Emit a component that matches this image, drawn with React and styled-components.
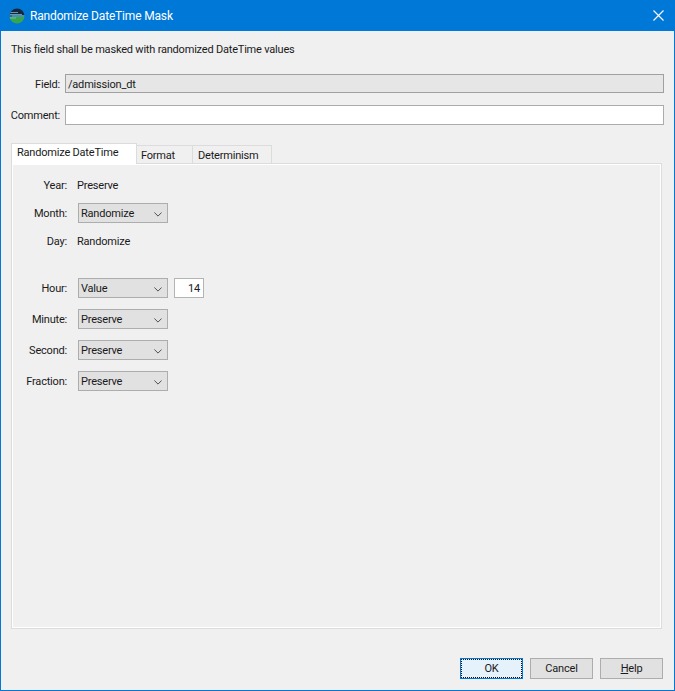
import React from 'react'
import styled, { createGlobalStyle } from 'styled-components'

const Global = createGlobalStyle`
  html, body { margin: 0; padding: 0; background: #f0f0f0; }
  * { box-sizing: border-box; }
`;
const Win = styled.div`
  width: 675px;
  height: 691px;
  display: flex;
  flex-direction: column;
  border: 1px solid #0078d7;
  border-top: none;
  background: #f0f0f0;
  color: #1a1a1a;
  font-family: "Roboto", "Noto Sans", sans-serif;
  font-size: 11px;
  letter-spacing: -0.2px;
  line-height: 16px;
`;
const TitleBar = styled.div`
  height: 31px;
  margin: 0 -1px;
  flex: none;
  display: flex;
  align-items: center;
  background: #0078d7;
  color: #fff;
  padding: 0 11px 0 9px;
  font-size: 12px;
  letter-spacing: -0.17px;
`;
const TitleText = styled.span`
  margin-left: 5px;
  flex: 1;
`;
const Intro = styled.div`
  margin: 11px 0 0 10px;
  height: 16px;
`;
const FieldRow = styled.div`
  display: flex;
  align-items: center;
  margin-top: ${p => p.$top}px;
`;
const FieldLabel = styled.div`
  width: 59px;
  padding-top: 2px;
  text-align: right;
`;
const TextBox = styled.div`
  margin-left: 5px;
  width: 599px;
  height: ${p => p.$h}px;
  padding: 2px 0 0 2px;
  display: flex;
  align-items: center;
  border: 1px solid ${p => (p.$disabled ? '#a0a0a0' : '#acacac')};
  background: ${p => (p.$disabled ? '#e6e6e6' : '#fff')};
`;
const TabStrip = styled.div`
  display: flex;
  align-items: flex-end;
  margin: 18px 0 0 10px;
  height: 20px;
  position: relative;
  z-index: 1;
`;
const Tab = styled.div`
  height: ${p => (p.$active ? 21 : 18)}px;
  width: ${p => p.$w}px;
  padding-left: ${p => p.$pad}px;
  padding-top: ${p => (p.$active ? 0 : 2)}px;
  padding-bottom: ${p => (p.$active ? 2 : 0)}px;
  display: flex;
  align-items: center;
  border: 1px solid #dcdcdc;
  border-left-width: ${p => (p.$active ? 1 : 0)}px;
  border-bottom: none;
  background: ${p => (p.$active ? '#fff' : '#f0f0f0')};
  margin-bottom: ${p => (p.$active ? -1 : 0)}px;
`;
const Panel = styled.div`
  margin: 0 0 0 10px;
  width: 651px;
  height: 466px;
  border: 1px solid #dcdcdc;
  box-shadow: inset 0 0 0 1px #fff;
  padding-top: 11px;
`;
const Row = styled.div`
  display: flex;
  align-items: center;
  height: 20px;
  margin-bottom: ${p => p.$after}px;
`;
const RowLabel = styled.div`
  width: 55px;
  padding-top: 2px;
  text-align: right;
  margin-right: 10px;
`;
const RowValue = styled.div`
  padding-top: 2px;
`;
const Combo = styled.div`
  width: 90px;
  height: 20px;
  margin-left: 1px;
  display: flex;
  align-items: center;
  justify-content: space-between;
  padding: 2px 5px 0 2px;
  border: 1px solid #adadad;
  background: #e1e1e1;
`;
const Chevron = () => (
  <svg width="8" height="5" viewBox="0 0 8 5">
    <path d="M0.4 0.5 L4 4.1 L7.6 0.5" fill="none" stroke="#404040" strokeWidth="0.9" />
  </svg>
);
const NumberBox = styled.div`
  width: 30px;
  height: 20px;
  margin-left: 6px;
  padding: 2px 3px 0 0;
  display: flex;
  align-items: center;
  justify-content: flex-end;
  border: 1px solid #b4b4b4;
  background: #fff;
`;
const Footer = styled.div`
  display: flex;
  justify-content: flex-end;
  gap: 7px;
  margin: 29px 11px 0 0;
`;
const Button = styled.div`
  width: 63px;
  height: 21px;
  display: flex;
  align-items: center;
  justify-content: center;
  border: 1px solid ${p => (p.$primary ? '#0078d7' : '#adadad')};
  background: ${p => (p.$primary ? '#e5f1fb' : '#e1e1e1')};
  outline: ${p => (p.$primary ? '1px dotted #111' : 'none')};
  outline-offset: -2px;
  u { text-underline-offset: 1px; }
`;

const AppIcon = () => (
  <svg width="16" height="16" viewBox="0 0 16 16">
    <defs>
      <clipPath id="disc"><circle cx="8" cy="8" r="7.5" /></clipPath>
    </defs>
    <g clipPath="url(#disc)">
      <rect width="16" height="7" fill="#16283a" />
      <rect y="7" width="16" height="2" fill="#2a6f8f" />
      <rect y="9" width="16" height="7" fill="#35a64a" />
      <path d="M0 4.5h9M0 6.5h13M3 8h13M0 10h7" stroke="#8cc8e8" strokeWidth="0.7" />
    </g>
  </svg>
);

const CloseIcon = () => (
  <svg width="11" height="11" viewBox="0 0 11 11">
    <path d="M0.5 0.5 L10.5 10.5 M10.5 0.5 L0.5 10.5" stroke="#fff" strokeWidth="1.1" />
  </svg>
);

const rows = [
  { label: 'Year:', text: 'Preserve', after: 8 },
  { label: 'Month:', combo: 'Randomize', after: 8 },
  { label: 'Day:', text: 'Randomize', after: 27 },
  { label: 'Hour:', combo: 'Value', number: '14', after: 11 },
  { label: 'Minute:', combo: 'Preserve', after: 11 },
  { label: 'Second:', combo: 'Preserve', after: 11 },
  { label: 'Fraction:', combo: 'Preserve', after: 0 },
];

const App = () => {
  return (
    <Win>
      <Global />
      <TitleBar>
        <AppIcon />
        <TitleText>Randomize DateTime Mask</TitleText>
        <CloseIcon />
      </TitleBar>
      <Intro>This field shall be masked with randomized DateTime values</Intro>
      <FieldRow $top={16}>
        <FieldLabel>Field:</FieldLabel>
        <TextBox $disabled $h={19}>/admission_dt</TextBox>
      </FieldRow>
      <FieldRow $top={12}>
        <FieldLabel>Comment:</FieldLabel>
        <TextBox $h={20} />
      </FieldRow>
      <TabStrip>
        <Tab $active $w={126} $pad={5}>Randomize DateTime</Tab>
        <Tab $w={56} $pad={4}>Format</Tab>
        <Tab $w={79} $pad={5}>Determinism</Tab>
      </TabStrip>
      <Panel>
        {rows.map(r => (
          <Row key={r.label} $after={r.after}>
            <RowLabel>{r.label}</RowLabel>
            {r.text && <RowValue>{r.text}</RowValue>}
            {r.combo && (
              <Combo>
                {r.combo}
                <Chevron />
              </Combo>
            )}
            {r.number && <NumberBox>{r.number}</NumberBox>}
          </Row>
        ))}
      </Panel>
      <Footer>
        <Button $primary>OK</Button>
        <Button>Cancel</Button>
        <Button><span><u>H</u>elp</span></Button>
      </Footer>
    </Win>
  )
}

export default App
